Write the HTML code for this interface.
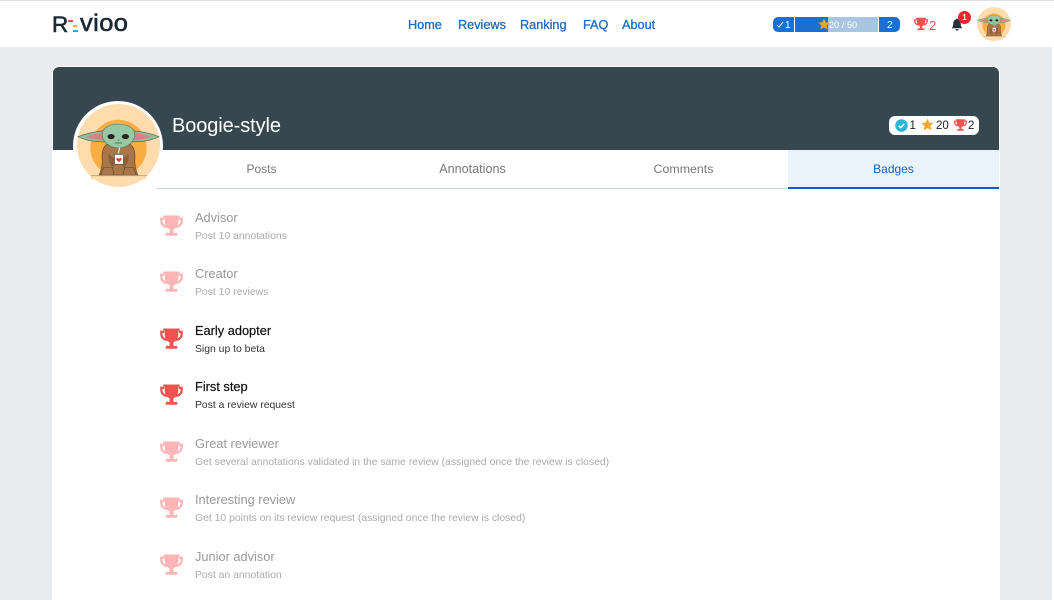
<!DOCTYPE html>
<html><head><meta charset="utf-8">
<style>
*{box-sizing:border-box;margin:0;padding:0}
html,body{width:1054px;height:600px;overflow:hidden;background:#e9ecef;font-family:"Liberation Sans",sans-serif}
.t{position:absolute;white-space:nowrap;line-height:1}
#top{position:absolute;left:0;top:1px;width:1054px;height:46px;background:#fff}
#topline{position:absolute;left:0;top:0;width:1054px;height:1px;background:#dcdfe3}
#edge{position:absolute;left:1052px;top:47px;width:2px;height:553px;background:#fff}
.nav{font:12.700px "Liberation Sans",sans-serif;color:#1a6cc4;top:17.500px;-webkit-text-stroke:.3px #1a6cc4}
#card{position:absolute;left:52px;top:66px;width:948px;height:534px;background:#fff;border:1px solid #fff;border-radius:7px 7px 0 0}
#hero{position:absolute;left:53px;top:67px;width:946px;height:83px;background:#37474f;border-radius:6px 6px 0 0}
.tab{position:absolute;top:150px;height:39px;width:211px;text-align:center;font:12.600px/38px "Liberation Sans",sans-serif;color:#777;border-bottom:1px solid #c9d5e0}
.name{font:12.800px "Liberation Sans",sans-serif;left:195px}
.desc{font:10.400px "Liberation Sans",sans-serif;left:195px}
.on .name{color:#111;-webkit-text-stroke:.2px #111}.on .desc{color:#333}
.off .name{color:#999}.off .desc{color:#aaa}
.trophy{position:absolute;left:160px}
</style></head><body>
<svg width="0" height="0" style="position:absolute">
<defs>
<symbol id="tr" viewBox="0 0 24 24">
<path fill="none" stroke="currentColor" stroke-width="2.400" d="M4.500 4H1.400v2.500c0 3 2.500 5.500 5.500 6M19.500 4h3.100v2.500c0 3-2.500 5.500-5.500 6"/>
<path fill="currentColor" d="M3.500.5h17v2.300H19V7c0 4-2 7-5 7.700v4H18v3H6v-3h4v-4C7 14 5 11 5 7V2.800H3.500z"/>
</symbol>
<symbol id="yoda" viewBox="0 0 84 84">
<circle cx="42" cy="42" r="42" fill="#fedcae"/>
<circle cx="42" cy="44.500" r="28.500" fill="#f9ae45"/>
<path fill="#fedcae" d="M14 72h56v4H14z"/>
<path fill="#a9764a" stroke="#5f4026" stroke-width=".7" d="M30 41c-4 3-5 9-4.500 15 .5 6-1 11-3 16h39c-2-5-3.500-10-3-16 .5-6-.5-12-4.500-15z"/>
<path fill="#90c29b" stroke="#3f5c50" stroke-width=".6" d="M1 33c8-3 17-5 27-6l2 11C20 39 9 37 1 33z"/>
<path fill="#90c29b" stroke="#3f5c50" stroke-width=".6" d="M83 33c-8-3-17-5-27-6l-2 11c10 1 21-1 29-5z"/>
<path fill="#dd7f88" d="M9 33c6-2 12-3.500 19-4.500l1.500 8C22 37 15 35.500 9 33zM75 33c-6-2-12-3.500-19-4.500l-1.500 8c7.500.5 14.500-1 20.500-3.500z"/>
<path fill="#97c8a3" stroke="#4e6f5f" stroke-width=".6" d="M25.500 31c0-7 7.500-10.500 16.500-10.500S58.500 24 58.500 31 51 44.500 42 44.500 25.500 38 25.500 31z"/>
<ellipse cx="34.500" cy="33" rx="3.600" ry="2.600" fill="#2a211d"/><ellipse cx="49" cy="33" rx="3.600" ry="2.600" fill="#2a211d"/>
<path stroke="#3d5f4e" stroke-width=".7" fill="none" d="M38.500 39.500h7M41 36.500h2"/>
<path fill="#8a5f3a" d="M32 50c2 3 5 5 7 6l-2 8c-4-2-6-8-5-14zM52 50c-2 3-5 5-7 6l2 8c4-2 6-8 5-14z"/>
<rect x="38" y="51" width="9" height="10" rx="1" fill="#fff" stroke="#555" stroke-width=".7"/>
<path fill="#e8343c" d="M42.500 59l-2.500-2.500c-1-1.800 1.500-2.500 2.500-1 1-1.500 3.500-.8 2.500 1z"/>
<path stroke="#fff" stroke-width=".9" fill="none" d="M42.500 50c-1.500-2 1.500-3 0-6"/>
<path fill="#a9764a" stroke="#5f4026" stroke-width=".6" d="M27 64h9l1 8H24zM48 64h9l3 8H47z"/>
<path stroke="#c6a37e" stroke-width="1" d="M14 72.500h57"/>
</symbol>
<symbol id="star" viewBox="0 0 24 24"><path fill="#f5a623" d="M12 1l3.300 7.500 8 .8-6 5.400 1.800 8L12 18.600 4.900 22.700l1.800-8-6-5.400 8-.8z"/></symbol>
</defs>
</svg>

<div id="top"></div><div id="topline"></div><div id="edge"></div>

<!-- logo -->
<div class="t" style="left:52px;top:12.500px;font:22.500px/24px 'Liberation Sans',sans-serif;color:#1b2a35;-webkit-text-stroke:.6px #1b2a35">R</div>
<div style="position:absolute;left:68px;top:20px;width:5px;height:2px;background:#ee4b4b"></div>
<div style="position:absolute;left:73px;top:24.500px;width:4px;height:2px;background:#f5b335"></div>
<div style="position:absolute;left:73px;top:29.500px;width:5px;height:2px;background:#35a5e5"></div>
<div class="t" style="left:80px;top:12.200px;font:24px/24px 'Liberation Sans',sans-serif;color:#1b2a35;letter-spacing:.4px;-webkit-text-stroke:.6px #1b2a35;transform:scaleX(1.06);transform-origin:0 0">vioo</div>

<div class="t nav" style="left:408px">Home</div>
<div class="t nav" style="left:458px">Reviews</div>
<div class="t nav" style="left:520px">Ranking</div>
<div class="t nav" style="left:583px">FAQ</div>
<div class="t nav" style="left:622px">About</div>

<!-- progress -->
<div style="position:absolute;left:773px;top:17px;width:127px;height:15px;background:#1a6fd0;border-radius:5px;overflow:hidden">
 <div style="position:absolute;left:55px;top:0;width:50px;height:15px;background:#a8c5e2"></div>
 <div style="position:absolute;left:21px;top:0;width:1px;height:15px;background:#fff"></div>
 <div style="position:absolute;left:105px;top:0;width:1px;height:15px;background:#fff"></div>
</div>
<svg style="position:absolute;left:775px;top:20px" width="10" height="9" viewBox="0 0 10 9"><path d="M2 5l2 2 4-5" stroke="#fff" stroke-width="1" fill="none"/></svg>
<div class="t" style="left:785px;top:19.500px;font:10px 'Liberation Sans',sans-serif;color:#fff">1</div>
<svg style="position:absolute;left:817.500px;top:18px" width="12" height="12"><use href="#star"/></svg>
<div class="t" style="left:829px;top:20px;font:9.200px 'Liberation Sans',sans-serif;color:#fff">20 / 50</div>
<div class="t" style="left:887px;top:19.500px;font:10px 'Liberation Sans',sans-serif;color:#fff">2</div>

<svg style="position:absolute;left:914px;top:17px;color:#ef5350" width="14" height="15"><use href="#tr"/></svg>
<div class="t" style="left:929px;top:17.500px;font:13px 'Liberation Sans',sans-serif;color:#ef5350">2</div>
<svg style="position:absolute;left:951px;top:17px" width="12" height="15" viewBox="0 0 13 15"><path fill="#25323b" d="M6.500 1c.6 0 1 .4 1 1 2.200.5 3 2.400 3 4.500 0 2.500.7 3.700 1.800 5H.7c1.100-1.300 1.800-2.500 1.800-5 0-2.100.8-4 3-4.500 0-.6.4-1 1-1zM4.800 12.500h3.400c0 1-.7 1.700-1.700 1.700s-1.700-.7-1.700-1.700z"/></svg>
<div style="position:absolute;left:958px;top:10.500px;width:13px;height:13px;border-radius:50%;background:#e8262c;color:#fff;font:bold 8px/13px 'Liberation Sans',sans-serif;text-align:center">1</div>
<svg style="position:absolute;left:977px;top:7px" width="34" height="34"><use href="#yoda"/></svg>

<!-- card -->
<div id="card"></div>
<div id="hero"></div>
<div class="t" style="left:172px;top:114px;font:20px 'Liberation Sans',sans-serif;color:#fff;line-height:24px;letter-spacing:-.1px">Boogie-style</div>

<div style="position:absolute;left:889px;top:116px;width:90px;height:19px;background:#fff;border-radius:6px"></div>
<svg style="position:absolute;left:893.500px;top:118px" width="15" height="15" viewBox="0 0 15 15"><circle cx="7.500" cy="7.500" r="6.300" fill="#27b5d6"/><path d="M4.700 7.700l2 2 3.600-3.800" stroke="#fff" stroke-width="1.500" fill="none"/></svg>
<div class="t" style="left:909.500px;top:120px;font:11.500px 'Liberation Sans',sans-serif;color:#222">1</div>
<svg style="position:absolute;left:920.500px;top:118px" width="13" height="13"><use href="#star"/></svg>
<div class="t" style="left:936px;top:120px;font:11.500px 'Liberation Sans',sans-serif;color:#222">20</div>
<svg style="position:absolute;left:953.500px;top:119px;color:#ef5350" width="13" height="13"><use href="#tr"/></svg>
<div class="t" style="left:968px;top:120px;font:11.500px 'Liberation Sans',sans-serif;color:#222">2</div>

<!-- tabs -->
<div class="tab" style="left:156px;font-size:12px">Posts</div>
<div class="tab" style="left:367px">Annotations</div>
<div class="tab" style="left:578px;font-size:12.400px">Comments</div>
<div class="tab" style="left:788px;background:#e8f3fc;color:#1565c0;border-bottom:2px solid #0d5bd1;font-size:12px">Badges</div>

<!-- big avatar -->
<div style="position:absolute;left:73px;top:100.500px;width:90px;height:90px;border-radius:50%;background:#fff"></div>
<svg style="position:absolute;left:76.500px;top:104px" width="83" height="83"><use href="#yoda"/></svg>

<!-- badges -->
<div class="off">
<svg class="trophy" style="top:215px;color:#fdb5b5" width="23" height="23"><use href="#tr"/></svg>
<div class="t name" style="top:209.500px">Advisor</div><div class="t desc" style="top:230.500px">Post 10 annotations</div>
<svg class="trophy" style="top:271px;color:#fdb5b5" width="23" height="23"><use href="#tr"/></svg>
<div class="t name" style="top:265.500px">Creator</div><div class="t desc" style="top:287px">Post 10 reviews</div>
</div>
<div class="on">
<svg class="trophy" style="top:328px;color:#ef5350" width="23" height="23"><use href="#tr"/></svg>
<div class="t name" style="top:322.500px">Early adopter</div><div class="t desc" style="top:343.500px">Sign up to beta</div>
<svg class="trophy" style="top:384px;color:#ef5350" width="23" height="23"><use href="#tr"/></svg>
<div class="t name" style="top:378.500px">First step</div><div class="t desc" style="top:400px">Post a review request</div>
</div>
<div class="off">
<svg class="trophy" style="top:441px;color:#fdb5b5" width="23" height="23"><use href="#tr"/></svg>
<div class="t name" style="top:435.500px">Great reviewer</div><div class="t desc" style="top:456.500px">Get several annotations validated in the same review (assigned once the review is closed)</div>
<svg class="trophy" style="top:497px;color:#fdb5b5" width="23" height="23"><use href="#tr"/></svg>
<div class="t name" style="top:491.500px">Interesting review</div><div class="t desc" style="top:513px">Get 10 points on its review request (assigned once the review is closed)</div>
<svg class="trophy" style="top:554px;color:#fdb5b5" width="23" height="23"><use href="#tr"/></svg>
<div class="t name" style="top:548.500px">Junior advisor</div><div class="t desc" style="top:569.500px">Post an annotation</div>
</div>
</body></html>
